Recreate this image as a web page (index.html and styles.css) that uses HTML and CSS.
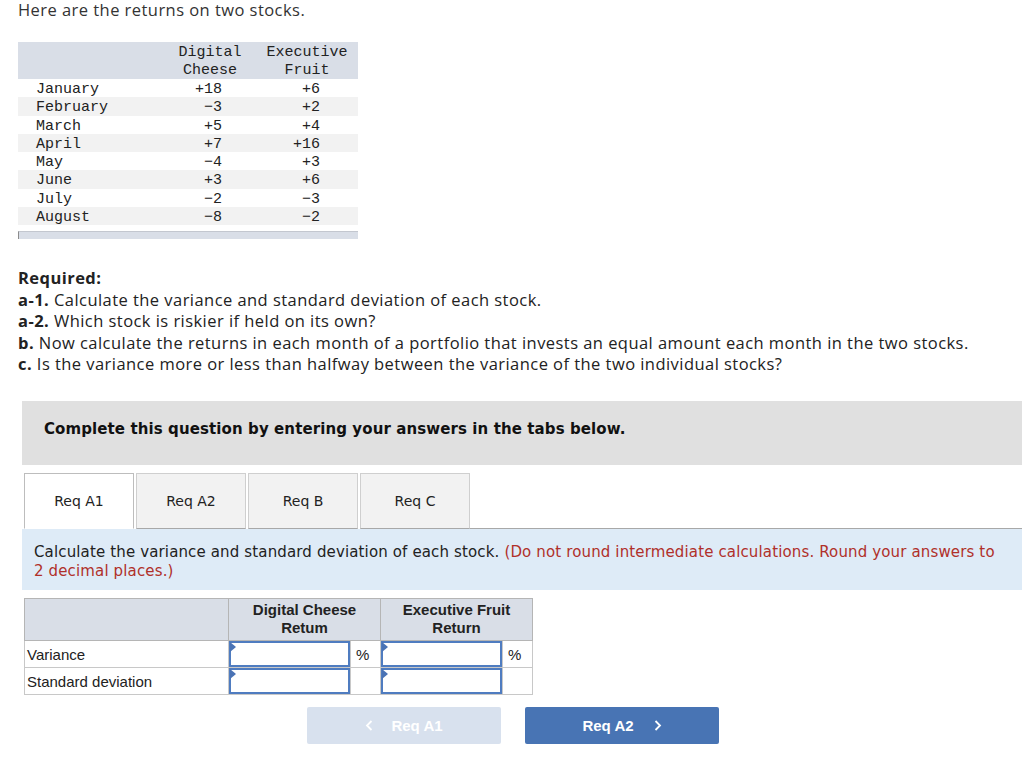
FILE: index.html
```html
<!DOCTYPE html>
<html>
<head>
<meta charset="utf-8">
<link rel="stylesheet" href="styles.css">
</head>
<body>
<div class="page">
  <p class="intro">Here are the returns on two stocks.</p>

  <table class="returns">
    <thead>
      <tr><th class="lbl"></th><th class="c1">Digital<br>Cheese</th><th class="c2">Executive<br>Fruit</th></tr>
    </thead>
    <tbody>
      <tr><td class="lbl">January</td><td class="c1">+18</td><td class="c2">+6</td></tr>
      <tr><td class="lbl">February</td><td class="c1">−3</td><td class="c2">+2</td></tr>
      <tr><td class="lbl">March</td><td class="c1">+5</td><td class="c2">+4</td></tr>
      <tr><td class="lbl">April</td><td class="c1">+7</td><td class="c2">+16</td></tr>
      <tr><td class="lbl">May</td><td class="c1">−4</td><td class="c2">+3</td></tr>
      <tr><td class="lbl">June</td><td class="c1">+3</td><td class="c2">+6</td></tr>
      <tr><td class="lbl">July</td><td class="c1">−2</td><td class="c2">−3</td></tr>
      <tr><td class="lbl">August</td><td class="c1">−8</td><td class="c2">−2</td></tr>
    </tbody>
  </table>
  <div class="scrollbar"></div>

  <div class="required">
    <p class="req-title">Required:</p>
    <p><b>a-1.</b> Calculate the variance and standard deviation of each stock.</p>
    <p><b>a-2.</b> Which stock is riskier if held on its own?</p>
    <p><b>b.</b> Now calculate the returns in each month of a portfolio that invests an equal amount each month in the two stocks.</p>
    <p><b>c.</b> Is the variance more or less than halfway between the variance of the two individual stocks?</p>
  </div>
</div>

<div class="question">
  <div class="banner">Complete this question by entering your answers in the tabs below.</div>

  <div class="tabs">
    <div class="tab active">Req A1</div>
    <div class="tab">Req A2</div>
    <div class="tab">Req B</div>
    <div class="tab">Req C</div>
    <div class="tab-rest"></div>
  </div>

  <div class="instructions">
    Calculate the variance and standard deviation of each stock. <span class="note">(Do not round intermediate calculations. Round your answers to 2 decimal places.)</span>
  </div>

  <table class="answers">
    <colgroup>
      <col class="col-lbl">
      <col class="col-inp">
      <col class="col-pct">
      <col class="col-inp">
      <col class="col-pct">
    </colgroup>
    <thead>
      <tr>
        <th></th>
        <th colspan="2">Digital Cheese<br>Retum</th>
        <th colspan="2">Executive Fruit<br>Return</th>
      </tr>
    </thead>
    <tbody>
      <tr>
        <td class="a-lbl">Variance</td>
        <td class="inp"><div class="box"></div></td>
        <td class="pct">%</td>
        <td class="inp"><div class="box"></div></td>
        <td class="pct">%</td>
      </tr>
      <tr>
        <td class="a-lbl">Standard deviation</td>
        <td class="inp"><div class="box"></div></td>
        <td class="pct"></td>
        <td class="inp"><div class="box"></div></td>
        <td class="pct"></td>
      </tr>
    </tbody>
  </table>

  <div class="nav">
    <div class="btn prev"><svg class="chev" width="8" height="11" viewBox="0 0 8 11"><polyline points="6.5,1 2,5.5 6.5,10" fill="none" stroke="#fff" stroke-width="1.8"/></svg>Req A1</div>
    <div class="btn next">Req A2<svg class="chev" width="8" height="11" viewBox="0 0 8 11"><polyline points="1.5,1 6,5.5 1.5,10" fill="none" stroke="#fff" stroke-width="1.8"/></svg></div>
  </div>
</div>
</body>
</html>
```

FILE: styles.css
```css
* { box-sizing: border-box; }
body {
  margin: 0;
  background: #fff;
  color: #222;
  font-family: "Liberation Sans", Arial, sans-serif;
}
.page { padding-left: 18px; }
.intro {
  margin: 0;
  font-family: "Open Sans", "Liberation Sans", sans-serif;
  font-size: 16.5px;
  letter-spacing: 0.45px;
  line-height: 20px;
  color: #333;
}
.returns {
  margin-top: 22px;
  border-collapse: collapse;
  font-family: "Liberation Mono", "Courier New", monospace;
  font-size: 15px;
  color: #222;
  width: 340px;
  table-layout: fixed;
}
.returns th {
  background: #d9dee7;
  font-weight: normal;
  line-height: 17.5px;
  padding: 2px 0 0 0;
  text-align: center;
}
.returns td {
  line-height: 14.3px;
  height: 18.3px;
  padding: 4px 0 0 0;
}
.returns tbody tr:nth-child(even) td { background: #f2f2f2; }
.returns .lbl { width: 146px; padding-left: 18px; text-align: left; }
.returns .c1 { width: 92px; }
.returns .c2 { width: 102px; }
.returns td.c1 { text-align: right; padding-right: 34px; }
.returns td.c2 { text-align: right; padding-right: 38px; }
.scrollbar {
  margin-top: 6px;
  width: 340px;
  height: 8px;
  background: #d9dee7;
  border-top: 1px solid #c3c7cf;
  border-left: 1px solid #8c8c8c;
}
.required {
  margin-top: 28px;
  font-family: "Open Sans", "Liberation Sans", sans-serif;
  font-size: 16.5px;
  letter-spacing: 0.45px;
  line-height: 21.5px;
  color: #222;
}
.required p { margin: 0; }
.req-title { font-weight: bold; }

.question {
  margin: 26px 2px 0 22px;
}
.banner {
  background: #e0e0e0;
  height: 64px;
  padding: 18px 0 0 22px;
  font-family: "DejaVu Sans", Verdana, sans-serif;
  font-weight: bold;
  font-size: 15px;
  letter-spacing: 0.1px;
  line-height: 20px;
  color: #111;
}
.tabs {
  display: flex;
  margin-top: 8px;
  padding-left: 2px;
  height: 56px;
}
.tab {
  width: 110px;
  height: 56px;
  margin-right: 2px;
  border: 1px solid #cfcfcf;
  border-bottom: 1px solid #a8a8a8;
  background: #f2f2f2;
  display: flex;
  align-items: center;
  justify-content: center;
  font-family: "DejaVu Sans", Verdana, sans-serif;
  font-size: 14px;
  color: #222;
}
.tab.active {
  background: #fff;
  border-color: #bdbdbd;
  border-bottom-color: #fff;
}
.tab-rest {
  flex: 1;
  border-bottom: 1px solid #a8a8a8;
  margin-left: -2px;
}
.instructions {
  background: #deebf7;
  height: 61px;
  padding: 14px 22px 0 12px;
  font-family: "DejaVu Sans", Verdana, sans-serif;
  font-size: 15px;
  letter-spacing: 0.14px;
  line-height: 19px;
  color: #222;
}
.note { color: #b0302a; }

.answers {
  margin: 8px 0 0 2px;
  border-collapse: collapse;
  width: 508px;
  font-size: 15px;
  color: #222;
  table-layout: fixed;
}
.col-lbl { width: 204px; }
.col-inp { width: 122px; }
.col-pct { width: 30px; }
.answers th {
  background: #d9dee7;
  border: 1px solid #b5b5b5;
  height: 42px;
  font-weight: bold;
  line-height: 18px;
  padding: 0;
}
.answers td {
  border: 1px solid #c8c8c8;
  height: 27px;
  padding: 1px 0 0 0;
}
.answers td.inp { padding: 0; }
.answers td.a-lbl { padding-left: 2px; }
.answers td.pct { padding-left: 5px; }
.box {
  position: relative;
  height: 26px;
  border: 2px solid #4f7cc0;
  background: #fff;
}
.box::before {
  content: "";
  position: absolute;
  left: -1px;
  top: -1px;
  border-top: 5px solid transparent;
  border-bottom: 5px solid transparent;
  border-left: 6px solid #4a73b5;
}

.nav {
  display: flex;
  margin: 12px 0 0 285px;
  gap: 24px;
}
.btn {
  width: 194px;
  height: 37px;
  border-radius: 2px;
  display: flex;
  align-items: center;
  justify-content: center;
  font-weight: bold;
  font-size: 15px;
  color: #fff;
}
.btn.prev { background: #d8e1ee; }
.btn.next { background: #4874b4; }
.btn.prev .chev { margin-right: 18px; }
.btn.next .chev { margin-left: 20px; }
```
